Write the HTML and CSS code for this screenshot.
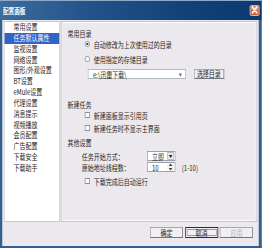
FILE: index.html
```html
<!DOCTYPE html>
<html lang="zh">
<head>
<meta charset="utf-8">
<title>配置面板</title>
<link rel="stylesheet" href="styles.css">
</head>
<body>
<div class="viewport">
<div class="window">
  <div class="titlebar">
    <span class="title">配置面板</span>
    <span class="close"><svg width="9" height="8" viewBox="0 0 9 8"><path d="M1.5 1.2 L7.5 6.8 M7.5 1.2 L1.5 6.8" stroke="#fff" stroke-width="1.8" stroke-linecap="round"/></svg></span>
  </div>
  <div class="frame">
    <div class="main">
      <ul class="nav">
        <li>常用设置</li>
        <li class="active">任务默认属性</li>
        <li>监视设置</li>
        <li>网络设置</li>
        <li>图形/外观设置</li>
        <li>BT设置</li>
        <li>eMule设置</li>
        <li>代理设置</li>
        <li>消息提示</li>
        <li>视频播放</li>
        <li>会员配置</li>
        <li>广告配置</li>
        <li>下载安全</li>
        <li>下载助手</li>
      </ul>
      <div class="panel">
        <div class="row head">常用目录</div>
        <div class="row opt"><span class="radio checked"></span>自动修改为上次使用过的目录</div>
        <div class="row opt gap-s"><span class="radio"></span>使用指定的存储目录</div>
        <div class="row ctrl gap-m">
          <div class="combo"><span>e:\迅雷下载\</span><span class="caret">▾</span></div>
          <button class="btn pick">选择目录</button>
        </div>
        <div class="row head gap-l">新建任务</div>
        <div class="row opt"><span class="check"></span>新建面板显示引用页</div>
        <div class="row opt gap-xs"><span class="check"></span>新建任务时不显示主界面</div>
        <div class="row head gap-t">其他设置</div>
        <div class="row ctrl gap-u">
          <span class="label">任务开始方式：</span>
          <div class="select"><span>立即</span><span class="drop"><svg width="5" height="3" viewBox="0 0 5 3"><path d="M0 0 H5 L2.5 3 Z" fill="#222"/></svg></span></div>
        </div>
        <div class="row ctrl gap-xxs">
          <span class="label">原始地址线程数：</span>
          <div class="select"><span>10</span><span class="spin"><svg width="5" height="8" viewBox="0 0 5 8"><path d="M0 3 H5 L2.5 0.5 Z M0 5 H5 L2.5 7.5 Z" fill="#444"/></svg></span></div>
          <span class="range">(1-10)</span>
        </div>
        <div class="row opt gap-u"><span class="check"></span>下载完成后自动运行</div>
      </div>
    </div>
    <div class="footer">
      <button class="btn">确定</button>
      <button class="btn focus">取消</button>
      <button class="btn disabled">应用</button>
    </div>
  </div>
</div>
</div>
</body>
</html>
```

FILE: styles.css
```css
html, body {
  margin: 0;
  padding: 0;
  overflow: hidden;
  background: #ebe9ee;
}

.viewport {
  width: 262px;
  height: 248px;
  overflow: hidden;
}

.window {
  width: 349.33px;
  height: 248px;
  transform: scaleX(0.75);
  transform-origin: 0 0;
  display: flex;
  flex-direction: column;
  font-family: "Noto Sans CJK SC", "Noto Sans", sans-serif;
  font-size: 8px;
  color: #1e1e22;
}

.titlebar {
  height: 20px;
  flex: none;
  box-sizing: border-box;
  display: flex;
  align-items: center;
  justify-content: space-between;
  padding: 0 3px 0 4px;
  background: linear-gradient(to right, #3d6c9d, #22528a 35%, #123f75 75%, #0c3a70);
  box-shadow: inset 0 1px 0 #8fa9c6;
}

.title {
  color: #fff;
  font-size: 7.5px;
  font-weight: bold;
}

.close {
  width: 13px;
  height: 11px;
  box-sizing: border-box;
  border: 1px solid #f2c3ae;
  border-radius: 2px;
  background: linear-gradient(#ee936a, #d65a33);
  display: flex;
  align-items: center;
  justify-content: center;
}

.frame {
  flex: 1;
  display: flex;
  flex-direction: column;
  background: #ebe9ee;
  border-left: 3px solid #34608f;
  border-right: 4px solid #34608f;
  border-bottom: 2px solid #34608f;
}

.main {
  display: flex;
  height: 202px;
  box-sizing: border-box;
  padding: 1px 2px 0 2px;
  gap: 1px;
}

.nav {
  width: 75px;
  margin: 0;
  padding: 0;
  list-style: none;
  background: #fff;
  border: 1px solid #cbc8ce;
  box-sizing: border-box;
}

.nav li {
  height: 10.85px;
  line-height: 10.85px;
  padding-left: 12px;
  white-space: nowrap;
}

.nav li.active {
  background: #3264c4;
  color: #fff;
}

.panel {
  flex: 1;
  box-sizing: border-box;
  border: 1px solid #c6c3ca;
  box-shadow: inset 1px 1px 0 #fbfbfc, inset -1px -1px 0 #fbfbfc;
  padding: 5.5px 0 0 8px;
  display: flex;
  flex-direction: column;
}

.row {
  display: flex;
  align-items: center;
  height: 11px;
  white-space: nowrap;
}

.row.ctrl {
  height: 10px;
}

.gap-xxs { margin-top: 1px; }
.gap-xs { margin-top: 2px; }
.gap-t { margin-top: 3px; }
.gap-u { margin-top: 3.5px; }
.gap-s { margin-top: 4px; }
.gap-m { margin-top: 4.5px; }
.gap-l { margin-top: 19.5px; }

.radio {
  width: 7px;
  height: 6px;
  box-sizing: border-box;
  border: 1px solid #9aa2ad;
  border-radius: 50%;
  background: #fff;
  margin: 0 5px 0 23px;
  position: relative;
}

.radio.checked::after {
  content: "";
  position: absolute;
  left: 1px;
  top: 1px;
  width: 3px;
  height: 2px;
  border-radius: 50%;
  background: #222;
}

.check {
  width: 7px;
  height: 6px;
  box-sizing: border-box;
  border: 1px solid #8a8f97;
  background: #fff;
  margin: 0 5px 0 23px;
}

.combo {
  margin-left: 27px;
  width: 131px;
  height: 10px;
  box-sizing: border-box;
  border: 1px solid #b4b8c0;
  background: #fff;
  display: flex;
  align-items: center;
  justify-content: space-between;
  padding: 0 5px 0 6px;
}

.caret {
  color: #666;
  font-size: 7px;
}

.btn {
  font-family: inherit;
  font-size: 8px;
  color: #1e1e22;
  height: 11px;
  width: 44px;
  padding: 0;
  box-sizing: border-box;
  border: 1px solid #a8a6ad;
  border-right-color: #77757c;
  border-bottom-color: #77757c;
  background: #f1eff3;
  line-height: 9px;
}

.btn.pick {
  width: 40px;
  height: 10px;
  margin-left: 10.5px;
  line-height: 8px;
}

.btn.focus {
  border: 1px solid #2c2c30;
  box-shadow: inset 0 0 0 1px #f1eff3, inset 0 0 0 2px #9c9aa0;
}

.btn.disabled {
  color: #b2b0b6;
}

.label {
  margin-left: 19px;
  width: 86.7px;
}

.select {
  width: 38.7px;
  height: 10px;
  box-sizing: border-box;
  border: 1px solid #9ca1aa;
  background: #fff;
  display: flex;
  align-items: center;
  justify-content: space-between;
  padding-left: 6px;
}

.drop, .spin {
  width: 9px;
  height: 8px;
  box-sizing: border-box;
  border: 1px solid #b9bcc2;
  background: #eceaee;
  display: flex;
  align-items: center;
  justify-content: center;
  margin-right: 1px;
}

.spin {
  border: none;
  background: #f4f3f5;
}

.range {
  margin-left: 8px;
}

.footer {
  flex: 1;
  display: flex;
  justify-content: flex-end;
  align-items: flex-start;
  gap: 2.7px;
  padding: 5px 8px 0 0;
}
```
